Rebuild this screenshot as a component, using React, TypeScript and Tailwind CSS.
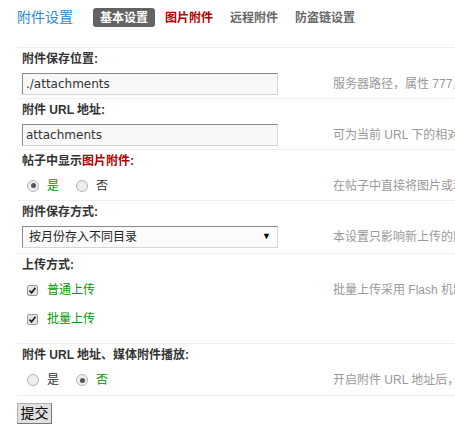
const cjk = "font-['Liberation_Sans','Noto_Sans_CJK_SC',sans-serif]";

function Radio({ checked }: { checked?: boolean }) {
  return (
    <span className="flex h-[12px] w-[12px] items-center justify-center rounded-full border border-[#b5b5b5] bg-[#eeeeee]">
      {checked && <span className="h-[5px] w-[5px] rounded-full bg-[#555]" />}
    </span>
  );
}

function Check() {
  return (
    <span className="flex h-[11px] w-[11px] items-center justify-center rounded-[2px] border border-[#9a9a9a] bg-[#e6e6e6]">
      <svg width="9" height="9" viewBox="0 0 9 9">
        <path d="M1.5 4.5 L3.5 6.8 L7.5 1.8" fill="none" stroke="#222" strokeWidth="1.8" />
      </svg>
    </span>
  );
}

function Label({ children }: { children: React.ReactNode }) {
  return (
    <div className="flex h-[22px] items-center border-t border-[#efefef] pl-[5px] text-[12px] font-bold text-[#333]">
      {children}
    </div>
  );
}

function Tip({ children }: { children: React.ReactNode }) {
  return <div className="whitespace-nowrap pl-[17px] text-[12px] text-[#999]">{children}</div>;
}

function TextInput({ value }: { value: string }) {
  return (
    <div className="flex h-[22px] w-[256px] items-center border border-[#d6d6d6] border-t-[#8a8a8a] border-l-[#8a8a8a] bg-[#f8f8f8] px-[3px] font-['DejaVu_Sans',sans-serif] text-[12px] text-[#333]">
      {value}
    </div>
  );
}

export default function App() {
  return (
    <div className={`h-[437px] w-[455px] overflow-hidden bg-white ${cjk}`}>
      <div className="flex h-[47px] items-start pl-[17px] pt-[8px]">
        <h3 className="mr-[20px] flex h-[19px] items-center text-[14px] text-[#2a8ad0]">附件设置</h3>
        <div className="flex gap-[3px] text-[12px] font-bold">
          <span className="flex h-[19px] items-center rounded-[3px] bg-[#636363] px-[7px] text-white">基本设置</span>
          <span className="flex h-[19px] items-center px-[7px] text-[#b00000]">图片附件</span>
          <span className="flex h-[19px] items-center px-[7px] text-[#666]">远程附件</span>
          <span className="flex h-[19px] items-center px-[7px] text-[#666]">防盗链设置</span>
        </div>
      </div>

      <div className="ml-[17px] w-[700px]">
        <Label>附件保存位置:</Label>
        <div className="flex items-center pt-[4px] pb-[3px] pl-[5px]">
          <TextInput value="./attachments" />
          <div className="w-[38px]" />
          <Tip>服务器路径，属性 777，必须为 web 可访问到的目录，结尾不加 “/”</Tip>
        </div>

        <Label>附件 URL 地址:</Label>
        <div className="flex items-center pt-[4px] pb-[3px] pl-[5px]">
          <TextInput value="attachments" />
          <div className="w-[38px]" />
          <Tip>可为当前 URL 下的相对地址或 http:// 开头的绝对地址</Tip>
        </div>

        <Label>
          帖子中显示<span className="text-[#b00000]">图片附件</span>:
        </Label>
        <div className="flex h-[29px] items-center pl-[5px] text-[12px]">
          <div className="flex w-[256px] items-center">
            <span className="ml-[5px]"><Radio checked /></span>
            <span className="ml-[8px] text-[#009900]">是</span>
            <span className="ml-[17px]"><Radio /></span>
            <span className="ml-[8px] text-[#333]">否</span>
          </div>
          <div className="w-[38px]" />
          <Tip>在帖子中直接将图片或动画附件显示出来，而不需要点击附件链接</Tip>
        </div>

        <Label>附件保存方式:</Label>
        <div className="flex items-center pt-[4px] pb-[5px] pl-[5px]">
          <div className="flex h-[22px] w-[256px] items-center justify-between border border-[#d6d6d6] border-t-[#8a8a8a] border-l-[#8a8a8a] bg-[#fbfbfb] pl-[6px] pr-[6px] text-[12px] text-[#222]">
            <span>按月份存入不同目录</span>
            <span className="text-[9px] text-black">▼</span>
          </div>
          <div className="w-[38px]" />
          <Tip>本设置只影响新上传的附件，设置更改之前的附件仍存放在原来位置</Tip>
        </div>

        <Label>上传方式:</Label>
        <div className="flex h-[68px] pl-[5px] text-[12px]">
          <div className="flex w-[256px] flex-col gap-[17px] pt-[9px] pl-[5px]">
            <div className="flex h-[12px] items-center">
              <Check />
              <span className="ml-[9px] text-[#009900]">普通上传</span>
            </div>
            <div className="flex h-[12px] items-center">
              <Check />
              <span className="ml-[9px] text-[#009900]">批量上传</span>
            </div>
          </div>
          <div className="w-[38px]" />
          <div className="pt-[6px]">
            <Tip>批量上传采用 Flash 机制，可以一次选择多个文件上传</Tip>
          </div>
        </div>

        <Label>附件 URL 地址、媒体附件播放:</Label>
        <div className="flex h-[30px] items-center pl-[5px] text-[12px]">
          <div className="flex w-[256px] items-center">
            <span className="ml-[5px]"><Radio /></span>
            <span className="ml-[8px] text-[#333]">是</span>
            <span className="ml-[17px]"><Radio checked /></span>
            <span className="ml-[8px] text-[#009900]">否</span>
          </div>
          <div className="w-[38px]" />
          <Tip>开启附件 URL 地址后，媒体附件将可以直接播放</Tip>
        </div>

        <div className="border-t border-[#efefef] pt-[7px]">
          <button className="flex h-[21px] w-[35px] items-center justify-center border border-[#b0b0b0] border-r-[#777] border-b-[#777] bg-[#e0e0e0] text-[14px] text-black">
            提交
          </button>
        </div>
      </div>
    </div>
  );
}
